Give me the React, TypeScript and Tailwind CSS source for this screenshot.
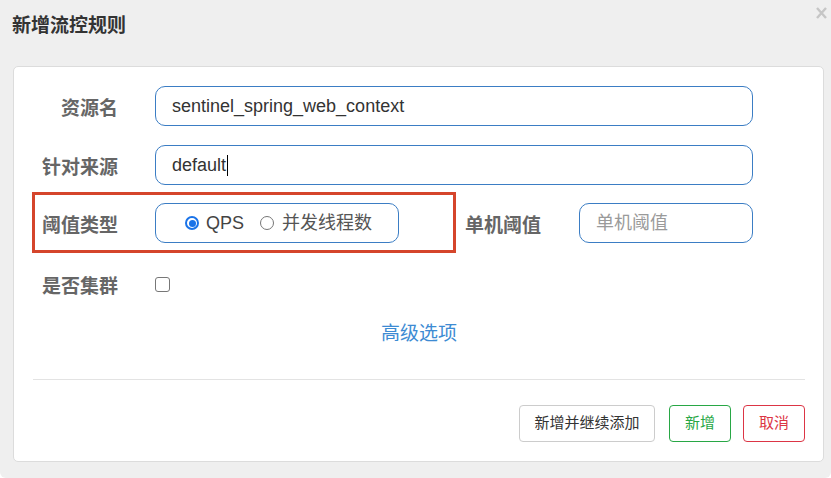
import React from "react";

const cjk = '"Liberation Sans", "Noto Sans CJK SC", sans-serif';

function Label({ children }: { children: React.ReactNode }) {
  return (
    <div className="w-[85px] shrink-0 pt-[5px] text-right text-[19px] font-bold leading-[28px] text-[#666]">
      {children}
    </div>
  );
}

function Radio({ checked }: { checked?: boolean }) {
  return checked ? (
    <span className="flex h-[14px] w-[14px] shrink-0 items-center justify-center rounded-full border-2 border-[#1a73e8] bg-white">
      <span className="h-[7px] w-[7px] rounded-full bg-[#1a73e8]" />
    </span>
  ) : (
    <span className="h-[14px] w-[14px] shrink-0 rounded-full border border-[#767676] bg-white" />
  );
}

export default function App() {
  return (
    <div className="min-h-screen bg-white" style={{ fontFamily: cjk }}>
      <div className="relative flex h-[478px] w-[831px] flex-col rounded-b-[6px] bg-[#efefef]">
        {/* dialog header */}
        <div className="h-[66px] pl-[12px] pt-[12px] text-[19px] font-bold leading-[28px] text-[#333]">
          新增流控规则
        </div>
        <button className="absolute left-[816px] top-[7px] h-[12px] w-[11px]">
          <svg viewBox="0 0 11 12" width="11" height="12">
            <path d="M1 1 L10 11 M10 1 L1 11" stroke="#c6c6c6" strokeWidth="2.4" fill="none" />
          </svg>
        </button>

        {/* form card */}
        <div className="relative ml-[13px] mr-[7px] rounded-[5px] border border-[#dcdcdc] bg-white pb-[19px] pl-[19px] pr-[18px] pt-[19px]">
          <div className="flex h-[40px] items-center">
            <Label>资源名</Label>
            <div className="ml-[37px] flex h-[40px] w-[598px] items-center rounded-[10px] border border-[#3b7dc4] pl-[16px] text-[18px] text-[#333]">
              sentinel_spring_web_context
            </div>
          </div>

          <div className="mt-[19px] flex h-[40px] items-center">
            <Label>针对来源</Label>
            <div className="ml-[37px] flex h-[40px] w-[598px] items-center rounded-[10px] border border-[#3b7dc4] pl-[16px] text-[18px] text-[#333]">
              default
              <span className="ml-[1px] h-[21px] w-[1px] bg-black" />
            </div>
          </div>

          <div className="mt-[18px] flex h-[40px] items-center">
            <Label>阈值类型</Label>
            <div className="ml-[37px] flex h-[40px] w-[244px] items-center rounded-[10px] border border-[#3b7dc4] pl-[29px] text-[18px]">
              <Radio checked />
              <span className="ml-[7px] text-[#444]">QPS</span>
              <span className="ml-[16px]" />
              <Radio />
              <span className="ml-[8px] text-[#555]">并发线程数</span>
            </div>
            <div className="ml-[66px] pt-[5px] text-[19px] font-bold leading-[28px] text-[#666]">单机阈值</div>
            <div className="ml-[38px] flex h-[40px] w-[174px] items-center rounded-[10px] border border-[#3b7dc4] pl-[16px] text-[18px] text-[#9a9a9a]">
              单机阈值
            </div>
          </div>

          <div className="mt-[21px] flex h-[40px] items-center">
            <Label>是否集群</Label>
            <span className="ml-[37px] h-[15px] w-[15px] rounded-[3px] border border-[#777] bg-white" />
          </div>

          <div className="mt-[10px] flex h-[40px] items-center justify-center text-[19px] text-[#3d8bd3]">
            高级选项
          </div>

          <div className="mt-[25px] h-px bg-[#e3e3e3]" />

          <div className="mt-[25px] flex justify-end">
            <button className="h-[37px] w-[136px] rounded-[4px] border border-[#cccccc] bg-white text-[15px] text-[#333]">
              新增并继续添加
            </button>
            <button className="ml-[14px] h-[37px] w-[62px] rounded-[4px] border border-[#28a745] bg-white text-[15px] text-[#28a745]">
              新增
            </button>
            <button className="ml-[12px] h-[37px] w-[62px] rounded-[4px] border border-[#dc3545] bg-white text-[15px] text-[#dc3545]">
              取消
            </button>
          </div>

          {/* highlight frame around the threshold type row */}
          <div className="pointer-events-none absolute left-[18px] top-[125px] h-[61px] w-[424px] border-[3px] border-[#d5452b]" />
        </div>
      </div>
    </div>
  );
}
